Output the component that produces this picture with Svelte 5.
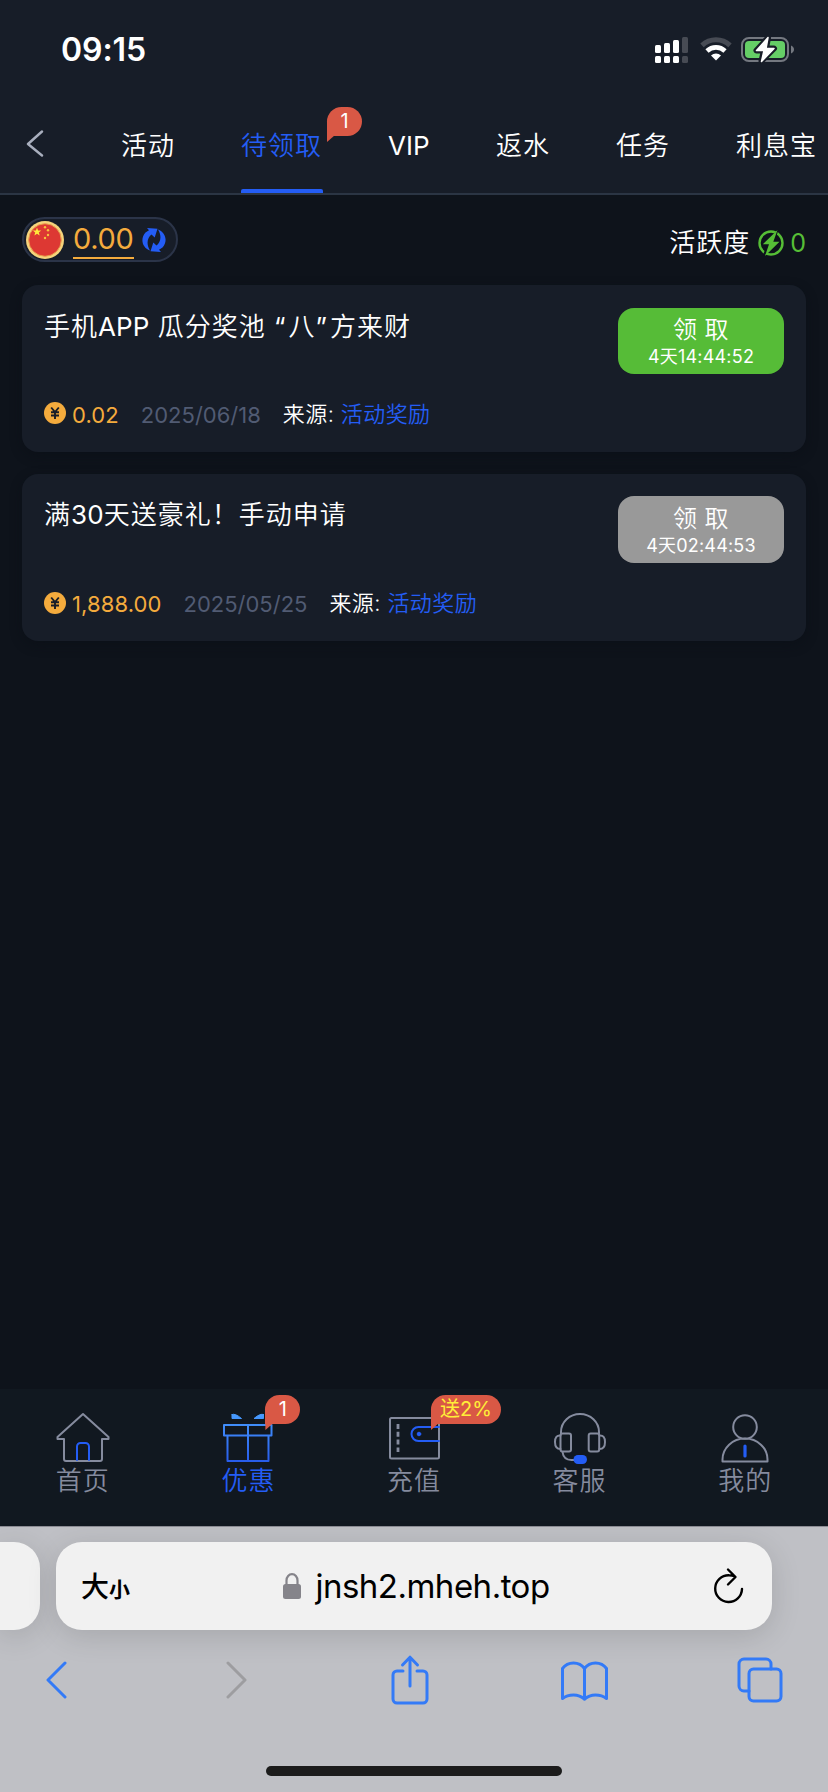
<script>
  const tabs = [
    { label: '活动' },
    { label: '待领取', active: true, badge: '1' },
    { label: 'VIP', latin: true },
    { label: '返水' },
    { label: '任务' },
    { label: '利息宝' }
  ];
  const rewards = [
    { title: '手机APP 瓜分奖池 “八”方来财', amount: '0.02', date: '2025/06/18', source: '活动奖励', left: '4天14:44:52', ready: true },
    { title: '满30天送豪礼！手动申请', amount: '1,888.00', date: '2025/05/25', source: '活动奖励', left: '4天02:44:53', ready: false }
  ];
  const nav = [
    { id: 'home', label: '首页' },
    { id: 'gift', label: '优惠', active: true, badge: '1' },
    { id: 'wallet', label: '充值', badge: '送2%', promo: true },
    { id: 'service', label: '客服' },
    { id: 'user', label: '我的' }
  ];
  // Latin runs and quotes are spaced differently from the Chinese glyphs
  const parts = (title) => title.split(/([A-Z0-9]+|[“”])/).filter(Boolean);
  const kind = (s) => (/^[A-Z0-9]/.test(s) ? 'latin' : /^[“”]/.test(s) ? 'quote' : '');
</script>

<div class="screen">
  <header>
    <div class="status">
      <span class="time">09:15</span>
      <div class="indicators">
        <svg class="signal" width="33" height="26" viewBox="0 0 33 26">
          <g fill="#fff">
            <rect x="0" y="8" width="6" height="8" rx="1.5" /><rect x="9" y="6" width="6" height="10" rx="1.5" /><rect x="18" y="3" width="6" height="13" rx="1.5" />
            <rect x="0" y="19" width="6" height="7" rx="1.5" /><rect x="9" y="19" width="6" height="7" rx="1.5" /><rect x="18" y="19" width="6" height="7" rx="1.5" />
          </g>
          <g fill="#474b54"><rect x="27" y="0" width="6" height="16" rx="1.5" /><rect x="27" y="19" width="6" height="7" rx="1.5" /></g>
        </svg>
        <svg class="wifi" width="32" height="24" viewBox="0 0 32 24">
          <path d="M2 8.3a20.5 20.5 0 0 1 28 0" fill="none" stroke="#474b54" stroke-width="5" />
          <path d="M7 14a13 13 0 0 1 18 0" fill="none" stroke="#fff" stroke-width="4.6" />
          <path d="M16 23.5l-5-5a7.4 7.4 0 0 1 10 0z" fill="#fff" />
        </svg>
        <svg class="battery" width="53" height="28" viewBox="0 0 53 28">
          <rect x="1" y="2" width="46" height="23" rx="7" fill="none" stroke="#747880" stroke-width="2" />
          <rect x="4" y="5" width="40" height="17" rx="4" fill="#65ce66" />
          <path d="M50 9.500c4 1.700 4 6.300 0 8z" fill="#747880" />
          <path d="M27 2L15.500 14.500h7.500L20.500 25 33 12.500h-8z" fill="#181d28" stroke="#181d28" stroke-width="6" stroke-linejoin="round" />
          <path d="M27 1.500L15.500 14.500h7.500L20.500 25.500 33 12.500h-8z" fill="#fff" stroke="#fff" stroke-width="1.500" stroke-linejoin="round" />
        </svg>
      </div>
    </div>
    <nav class="tabs">
      <svg class="back" width="18" height="28" viewBox="0 0 18 28"><path d="M16 1.500L2 14l14 11.500" fill="none" stroke="#a9afbe" stroke-width="2.400" stroke-linecap="round" stroke-linejoin="round" /></svg>
      {#each tabs as t}
        <div class="tab" class:active={t.active} class:roman={t.latin}>
          {t.label}
          {#if t.badge}<span class="badge">{t.badge}</span>{/if}
        </div>
      {/each}
    </nav>
  </header>

  <main>
    <div class="summary">
      <div class="balance">
        <svg width="38" height="38" viewBox="0 0 38 38">
          <circle cx="19" cy="19" r="19" fill="#f5d47c" /><circle cx="19" cy="19" r="16.300" fill="#dd3833" stroke="#e9a04c" stroke-width="1" />
          <path d="M11 6.500l1.100 2.900 3.100.1-2.400 1.900.9 3-2.700-1.700-2.600 1.700.8-3-2.400-1.900 3.100-.1z" fill="#ffe83b" />
          <g fill="#f6c43d"><circle cx="19" cy="6.300" r="1.200" /><circle cx="22" cy="9.300" r="1.200" /><circle cx="22" cy="14" r="1.200" /><circle cx="19" cy="17" r="1.200" /></g>
        </svg>
        <span class="money">0.00</span>
        <svg class="refresh" width="24" height="24" viewBox="0 0 24 24" fill="#245df5">
          <path d="M5 0L15.500.8 12.700 9.500 9.500 6.500C5.500 9.500 3.800 16 8 22.600 0 19.500-2 10.500 3.500 4.500L7 2.200z" />
          <path d="M19 24L8.500 23.200l2.800-8.700 3.200 3C18.500 14.500 20.200 8 16 1.400 24 4.500 26 13.500 20.500 19.500L17 21.800z" />
        </svg>
      </div>
      <div class="activity">
        <span>活跃度</span>
        <svg width="26" height="26" viewBox="0 0 26 26">
          <circle cx="13" cy="13" r="11.500" fill="none" stroke="#56be36" stroke-width="2.400" />
          <path d="M20.500-.5L3.500 15h5L4.500 27 22.500 11h-5.500z" fill="#0e131b" />
          <path d="M19.500 0L4.800 14.200h6.200L7 26 21.500 11.700h-6.200z" fill="#56be36" />
        </svg>
        <b>0</b>
      </div>
    </div>

    {#each rewards as r}
      <article class="card">
        <div class="top">
          <h2>{#each parts(r.title) as p}<span class={kind(p)}>{p}</span>{/each}</h2>
          <button class:ready={r.ready}><span class="claim">领 取</span><span class="left">{r.left}</span></button>
        </div>
        <div class="meta">
          <svg width="22" height="22" viewBox="0 0 22 22"><circle cx="11" cy="11" r="11" fill="#f4ab3d" /><path d="M7.200 5.500L11 10l3.800-4.500M11 10v7M7 10.300h8M7 13.500h8" fill="none" stroke="#181d28" stroke-width="1.900" /></svg>
          <span class="amount">{r.amount}</span>
          <span class="date">{r.date}</span>
          <span class="source">来源: <em>{r.source}</em></span>
        </div>
      </article>
    {/each}
  </main>

  <footer>
    {#each nav as n}
      <div class="item" class:active={n.active}>
        <div class="pic">
          <svg width="56" height="52" viewBox="0 0 56 52" fill="none" stroke="#858b9e" stroke-width="2" stroke-linejoin="round" stroke-linecap="round">
            {#if n.id === 'home'}
              <path d="M28 2L2.500 25V27H9v20a2 2 0 0 0 2 2h34a2 2 0 0 0 2-2V27h6.500v-2z" />
              <path d="M22 48V34.500a3.500 3.500 0 0 1 3.500-3.500h5a3.500 3.500 0 0 1 3.500 3.500V48" stroke="#245df5" />
            {:else if n.id === 'gift'}
              <defs><linearGradient id="g" gradientUnits="userSpaceOnUse" x1="0" y1="2" x2="0" y2="49"><stop offset="0" stop-color="#489cff" /><stop offset="1" stop-color="#285deb" /></linearGradient></defs>
              <path d="M4 13h47.500v10.500H4zM7.500 23.500h41V49H7.500zM28 13v36" stroke="url(#g)" />
              <path d="M12 2.500V6.500h9.500Q15 1 12 2.500M43.500 2.500V6.500H34Q40.500 1 43.500 2.500" fill="url(#g)" stroke="url(#g)" stroke-width="1" />
            {:else if n.id === 'wallet'}
              <rect x="4" y="6" width="49" height="40.500" rx="1.500" />
              <path d="M12 12v28" stroke-width="2.800" stroke-dasharray="5 2.800" stroke-linecap="butt" />
              <path d="M53 15H32.500a7 7 0 0 0 0 14H53" stroke="#245df5" /><circle cx="33" cy="22" r="1.800" fill="#245df5" stroke="#245df5" stroke-width="1" />
            {:else if n.id === 'service'}
              <rect x="8.500" y="21.500" width="10.500" height="18" rx="2" /><rect x="36.700" y="21.500" width="10.500" height="18" rx="2" />
              <path d="M9 21.500v-1.500a19 18 0 0 1 38 0v1.500M8.500 23.500Q3 23 3 30t5.500 7M47.500 23.500Q53 23 53 30t-5.500 7M10.500 40q1 8 9 8h3" />
              <rect x="21.500" y="43" width="13.500" height="9" rx="4.500" fill="#245df5" stroke="none" />
            {:else}
              <circle cx="28" cy="15" r="11.800" />
              <path d="M5.500 49.500V47.500a22.500 21 0 0 1 45 0v2z" /><path d="M28 34v10" stroke="#245df5" stroke-width="3.200" />
            {/if}
          </svg>
          {#if n.badge}<span class="badge" class:promo={n.promo}>{n.badge}</span>{/if}
        </div>
        <span class="name">{n.label}</span>
      </div>
    {/each}
  </footer>

  <section class="browser">
    <div class="bars">
      <div class="previous"></div>
      <div class="address">
        <span class="size">大<small>小</small></span>
        <div class="url">
          <svg width="18" height="26" viewBox="0 0 18 26"><rect x="0" y="11" width="18" height="15" rx="2.500" fill="#85848a" /><path d="M3.500 12V7.500a5.500 6.300 0 0 1 11 0V12" fill="none" stroke="#85848a" stroke-width="2.200" /></svg>
          <span>jnsh2.mheh.top</span>
        </div>
        <svg width="32" height="38" viewBox="0 0 32 38" fill="none" stroke="#000" stroke-width="2.400" stroke-linecap="round" stroke-linejoin="round"><path d="M23 9.500q-2.800-1.300-6-1.300A13.400 13.400 0 1 0 30 22M16 2.500l7.500 7.500-7.500 7.500" /></svg>
      </div>
    </div>
    <div class="tools">
      <svg width="22" height="38" viewBox="0 0 22 38"><path d="M19 2L2 19l17 17" /></svg>
      <svg class="forward" width="22" height="38" viewBox="0 0 22 38"><path d="M3 2l17 17L3 36" /></svg>
      <svg class="share" width="38" height="50" viewBox="0 0 38 50"><path d="M12 16H6a4 4 0 0 0-4 4v24a4 4 0 0 0 4 4h26a4 4 0 0 0 4-4V20a4 4 0 0 0-4-4h-6M19 31V3M11.500 10L19 2.200l7.500 7.800" /></svg>
      <svg class="book" width="47" height="40" viewBox="0 0 47 40"><path d="M23.500 38.200V7.500Q19.500 2 12.500 2T1.500 7.500V37.500Q6 34 12.500 34t11 4.200Q28 34 34.500 34t11 3.500V7.500Q41.500 2 34.500 2t-11 5.500" /></svg>
      <svg class="windows" width="46" height="46" viewBox="0 0 46 46"><path d="M12 34H7a5 5 0 0 1-5-5V7a5 5 0 0 1 5-5h22a5 5 0 0 1 5 5v5" /><rect x="12" y="12" width="32" height="32" rx="4.500" /></svg>
    </div>
    <div class="handle"></div>
  </section>
</div>

<style>
  :global(body) { margin: 0; background: #0e131b; }
  .screen { width: 828px; height: 1792px; overflow: hidden; display: flex; flex-direction: column; background: #0e131b; color: #fff; font-family: Inter, 'Noto Sans CJK SC', sans-serif; font-weight: 350; }
  svg { display: block; flex: none; }
  header { height: 195px; flex: none; box-sizing: border-box; background: #171d28; border-bottom: 2px solid #2b3544; }
  .status { height: 99px; display: flex; justify-content: space-between; padding: 0 34px 0 61px; }
  .time { font-size: 32px; font-weight: 600; line-height: 100px; letter-spacing: -.1px; }
  .indicators { display: flex; align-items: flex-start; padding-top: 36px; }
  .signal { margin: 1px 12px 0 0; }
  .wifi { margin: 1px 9px 0 0; }
  .tabs { height: 94px; display: flex; padding-left: 26px; gap: 66px; font-size: 26px; line-height: 94px; letter-spacing: 1px; white-space: nowrap; }
  .back { margin: 31px 11px 0 0; }
  .tab { position: relative; height: 94px; }
  .roman { font-weight: 400; letter-spacing: 0; width: 42px; }
  .tab.active { color: #245df5; }
  .tab.active::before { content: ''; position: absolute; left: 0; bottom: 0; width: 82px; height: 4px; border-radius: 2px 2px 0 0; background: #245df5; }
  .badge { position: absolute; box-sizing: border-box; min-width: 35px; height: 29px; padding: 0 9px; border-radius: 15px 15px 15px 0; background: #d95845; color: #fff; font-size: 20px; font-weight: 400; line-height: 28px; letter-spacing: 0; text-align: center; white-space: nowrap; }
  .badge::after { content: ''; position: absolute; left: 0; top: 28px; width: 8px; height: 7px; background: #d95845; clip-path: polygon(0 0, 100% 0, 0 100%); }
  .tab .badge { left: 86px; top: 8px; }
  main { flex: 1; min-height: 0; padding: 22px 22px 0; }
  .summary { height: 68px; display: flex; justify-content: space-between; align-items: flex-start; }
  .balance { display: flex; align-items: center; box-sizing: border-box; width: 156px; height: 45px; padding-left: 2px; border: 2px solid #2b3448; border-radius: 23px; background: #171d28; }
  .money { margin: 1px 8px 0 9px; width: 61px; height: 38px; line-height: 35px; border-bottom: 2px solid #f4ab3d; box-sizing: border-box; color: #f4ab3d; font-size: 29px; font-weight: 400; letter-spacing: -.3px; white-space: nowrap; }
  .activity { display: flex; align-items: center; margin-top: 6px; font-size: 26px; line-height: 40px; letter-spacing: 1px; }
  .activity svg { margin: 0 6px 0 8px; }
  .activity b { font-weight: 400; font-size: 25px; color: #56be36; letter-spacing: 0; }
  .card { box-sizing: border-box; height: 167px; margin-bottom: 22px; padding: 23px 22px 0; border-radius: 16px; background: #171d28; box-shadow: 0 4px 12px #0a0e1570; }
  .card + .card { padding-top: 22px; }
  .card + .card .top { height: 96px; }
  .card + .card .amount, .card + .card .date, .card + .card .source { position: relative; top: -1px; }
  .card + .card button { height: 67px; padding-top: 5px; }
  .top { display: flex; justify-content: space-between; height: 94px; }
  h2 { margin: 0; font-size: 26px; line-height: 38px; font-weight: inherit; letter-spacing: 1px; }
  .latin { font-weight: 400; letter-spacing: .1px; }
  .quote { font-weight: 400; letter-spacing: 3px; }
  button { width: 166px; height: 66px; padding: 4px 0 0; border: 0; border-radius: 16px; background: #999; color: #fff; font: inherit; display: flex; flex-direction: column; align-items: center; }
  button.ready { background: #56bc37; }
  .claim { font-size: 24px; line-height: 35px; letter-spacing: .5px; }
  .left { font-size: 18px; font-weight: 400; line-height: 20px; letter-spacing: .2px; }
  .meta { display: flex; height: 22px; line-height: 26px; font-size: 22px; letter-spacing: .4px; white-space: nowrap; }
  .amount { color: #f4ab3d; margin: 0 22px 0 6px; font-weight: 400; letter-spacing: .1px; }
  .date { color: #515b73; margin-right: 22px; font-weight: 400; letter-spacing: 0; }
  .source { line-height: 24px; }
  em { font-style: normal; color: #245df5; }
  footer { height: 137px; flex: none; display: grid; grid-template-columns: repeat(5, 1fr); background: #111820; }
  .item { display: flex; flex-direction: column; align-items: center; padding-top: 23px; color: #858b9e; }
  .item.active { color: #245df5; }
  .pic { position: relative; }
  .item .badge { left: 45px; top: -17px; }
  .item .promo { color: #ffee38; min-width: 69px; }
  .name { font-size: 26px; line-height: 34px; letter-spacing: 1px; }
  .browser { height: 266px; flex: none; box-sizing: border-box; border-top: 1px solid #8c8c94; background: #bfc0c5; }
  .bars { display: flex; gap: 16px; padding-top: 15px; }
  .previous { width: 40px; height: 88px; background: #f1f1f1; border-radius: 0 26px 26px 0; box-shadow: 0 6px 30px #0002; }
  .address { box-sizing: border-box; width: 716px; height: 88px; padding: 0 28px 0 25px; border-radius: 26px; background: #f1f1f1; color: #000; display: flex; align-items: center; justify-content: space-between; box-shadow: 0 6px 30px #0002; }
  .size { font-size: 28px; font-weight: 500; line-height: 88px; padding-top: 4px; }
  small { font-size: 21px; font-weight: 700; }
  .url { display: flex; align-items: center; gap: 14px; margin-right: 9px; font-size: 33px; font-weight: 400; letter-spacing: -.5px; }
  .tools { display: flex; align-items: center; padding: 0 0 0 46px; height: 100px; }
  .tools svg { fill: none; stroke: #337af7; stroke-width: 3; stroke-linecap: round; stroke-linejoin: round; }
  .tools .forward { stroke: #9d9da0; margin-left: 157px; }
  .tools .share { margin-left: 144px; }
  .tools .book { margin: 1px 0 0 132px; }
  .tools .windows { margin-left: 129px; }
  .handle { width: 296px; height: 10px; margin: 36px auto 0; border-radius: 5px; background: #1c1c1c; }
</style>
